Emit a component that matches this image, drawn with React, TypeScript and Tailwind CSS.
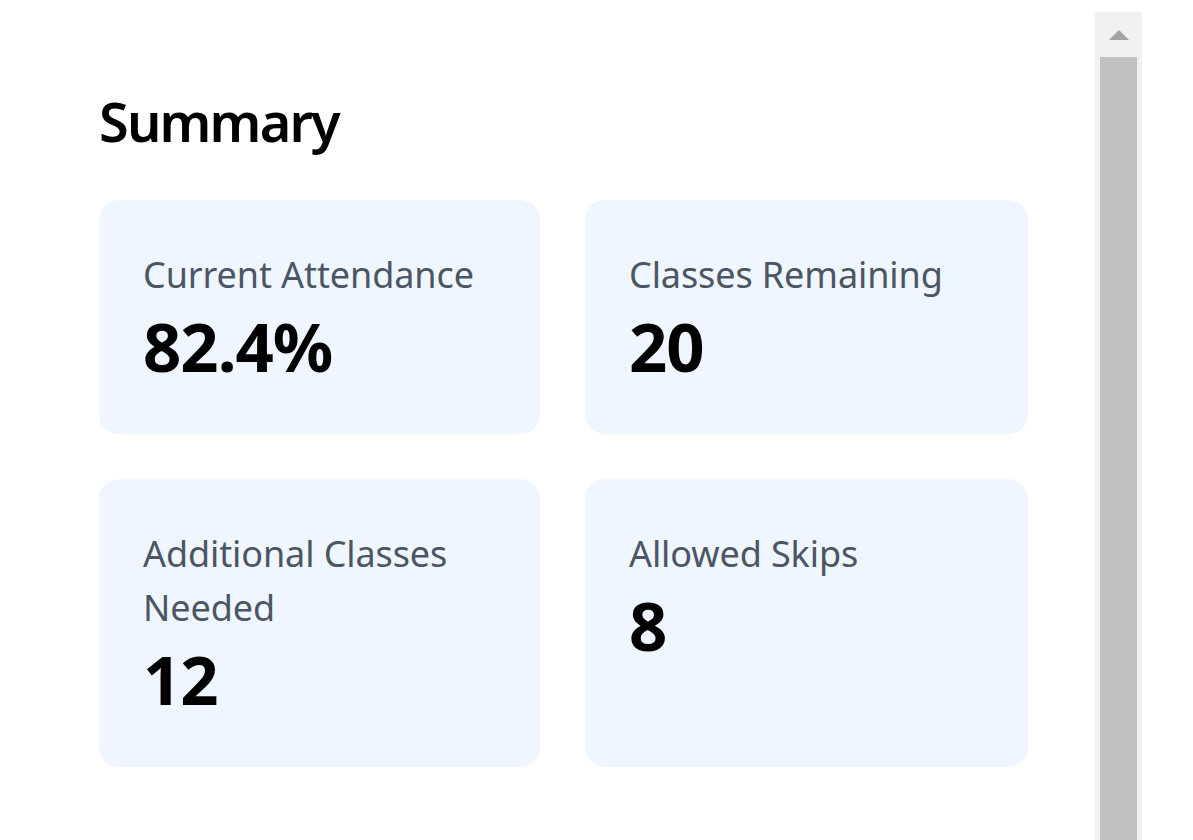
const stats = [
  { label: 'Current Attendance', value: '82.4%' },
  { label: 'Classes Remaining', value: '20' },
  { label: 'Additional Classes Needed', value: '12' },
  { label: 'Allowed Skips', value: '8' },
];

const StatCard = ({ label, value }: { label: string; value: string }) => (
  <div className="bg-[#eff6ff] rounded-[20px] px-[44px] pt-[48px] pb-[44px]">
    <p className="text-[36px] leading-[54px] tracking-[-0.1px] text-[#4b5563]">{label}</p>
    <p className="text-[67px] leading-[88px] tracking-[-1px] font-bold text-black">{value}</p>
  </div>
);

export default function App() {
  return (
    <div
      className="flex h-[840px] w-full overflow-hidden bg-white"
      style={{ fontFamily: '"Noto Sans", "Open Sans", sans-serif' }}
    >
      {/* Summary panel */}
      <div className="w-[1095px] shrink-0 pl-[99px] pt-[87px]">
        <h2 className="text-[54px] leading-[68px] tracking-[-1.8px] font-semibold text-black mb-[45px]">
          Summary
        </h2>
        <div className="grid w-[929px] grid-cols-[441px_443px] gap-x-[45px] gap-y-[45px]">
          {stats.map((s) => (
            <StatCard key={s.label} label={s.label} value={s.value} />
          ))}
        </div>
      </div>

      {/* Scrollbar */}
      <div className="mt-[12px] flex w-[47px] shrink-0 flex-col bg-[#f1f1f1]">
        <div className="flex h-[45px] items-center justify-center">
          <div className="h-0 w-0 border-x-[10px] border-b-[10px] border-x-transparent border-b-[#a3a3a3]" />
        </div>
        <div className="mx-[5px] flex-1 bg-[#c1c1c1]" />
      </div>
    </div>
  );
}
